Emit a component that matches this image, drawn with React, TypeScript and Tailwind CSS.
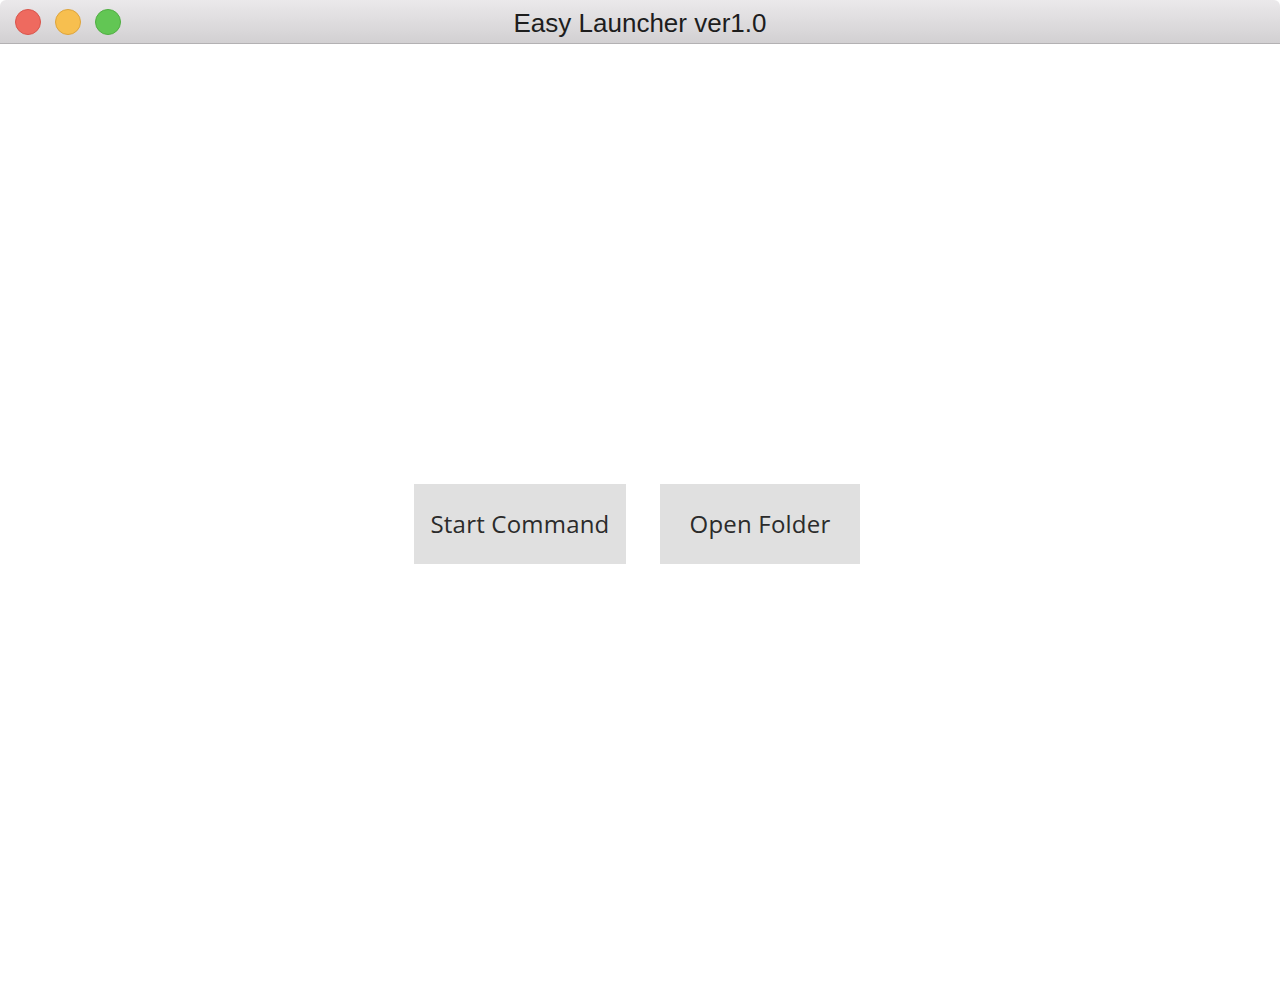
export default function App() {
    const lights = [
        { label: "close", color: "bg-[#ee6a5f]", border: "border-[#d9544a]" },
        { label: "minimize", color: "bg-[#f7bf4f]", border: "border-[#dea43a]" },
        { label: "zoom", color: "bg-[#62c654]", border: "border-[#4fae41]" },
    ];

    return (
        <div className="w-[1280px] h-[1004px] flex flex-col bg-white overflow-hidden" style={{ fontFamily: '"Liberation Sans", Arial, sans-serif' }}>
            <div className="relative h-[44px] shrink-0 flex items-center justify-center rounded-t-[6px] bg-gradient-to-b from-[#ebe9eb] to-[#d2d0d2] border-b border-[#b3b1b3]">
                <div className="absolute left-[15px] top-[9px] flex gap-[14px]">
                    {lights.map((l) => (
                        <div key={l.label} className={`w-[26px] h-[26px] rounded-full border ${l.color} ${l.border}`} />
                    ))}
                </div>
                <h1 className="text-[26px] text-[#1d1d1d] leading-none pt-[2px]">Easy Launcher ver1.0</h1>
            </div>

            <div className="flex-1 flex items-center justify-center gap-[34px] pr-[6px]" style={{ fontFamily: '"Open Sans", "Noto Sans", sans-serif' }}>
                <button className="w-[212px] h-[80px] bg-[#e0e0e0] text-[#2b2b2b] text-[24px] tracking-[0.2px] leading-none">
                    Start Command
                </button>
                <button className="w-[200px] h-[80px] bg-[#e0e0e0] text-[#2b2b2b] text-[24px] tracking-[0.2px] leading-none">
                    Open Folder
                </button>
            </div>
        </div>
    );
}
